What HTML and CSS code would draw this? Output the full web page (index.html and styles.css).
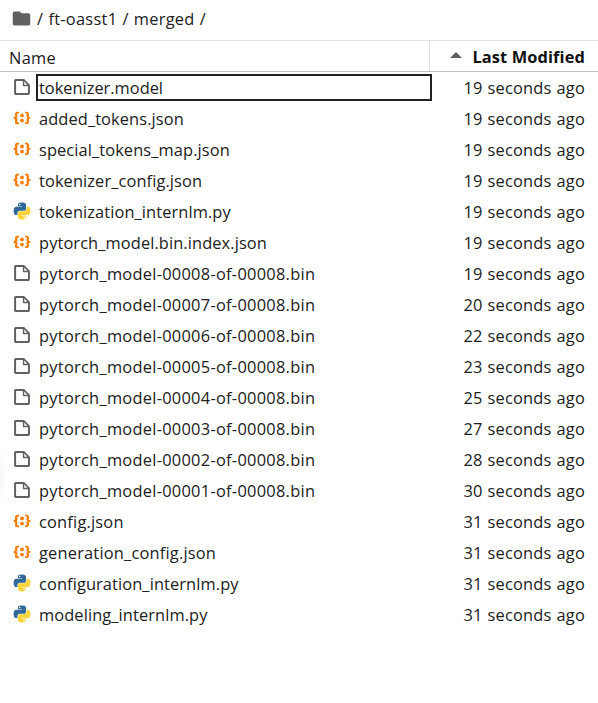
FILE: index.html
```html
<!DOCTYPE html>
<html lang="en">
<head>
<meta charset="utf-8">
<title>File browser</title>
<link rel="stylesheet" href="styles.css">
</head>
<body>
<svg class="defs" aria-hidden="true">
  <symbol id="file" viewBox="0 0 22 22"><path fill="#616161" d="M19.3 8.2l-5.5-5.5c-.3-.3-.7-.5-1.2-.5H3.9c-.8.1-1.6.9-1.6 1.8v14.1c0 .9.7 1.6 1.6 1.6h14.2c.9 0 1.6-.7 1.6-1.6V9.4c.1-.5-.1-.9-.4-1.2zm-5.8-3.3l3.4 3.6h-3.4V4.9zm3.9 12.7H4.7c-.1 0-.2 0-.2-.2V4.7c0-.2.1-.3.2-.3h7.2v4.4s0 .8.3 1.1c.3.3 1.1.3 1.1.3h4.3v7.2s-.1.2-.2.2z"/></symbol>
  <symbol id="json" viewBox="0 0 22 22"><g fill="#f57c00"><path d="M20.2 11.8c-1.6 0-1.7.5-1.7 1 0 .4.1.9.1 1.3.1.5.1.9.1 1.3 0 1.7-1.4 2.3-3.5 2.3h-.9v-1.9h.5c1.1 0 1.4 0 1.4-.8 0-.3 0-.6-.1-1 0-.4-.1-.8-.1-1.2 0-1.3 0-1.8 1.3-2-1.3-.2-1.3-.7-1.3-2 0-.4.1-.8.1-1.2.1-.4.1-.7.1-1 0-.8-.4-.7-1.4-.8h-.5V4.1h.9c2.2 0 3.5.7 3.5 2.3 0 .4-.1.9-.1 1.3-.1.5-.1.9-.1 1.3 0 .5.2 1 1.7 1v1.8zM1.8 10.1c1.6 0 1.7-.5 1.7-1 0-.4-.1-.9-.1-1.3-.1-.5-.1-.9-.1-1.3 0-1.6 1.4-2.3 3.5-2.3h.9v1.9h-.5c-1 0-1.4 0-1.4.8 0 .3 0 .6.1 1 0 .2.1.6.1 1 0 1.3 0 1.8-1.3 2C6 11.2 6 11.7 6 13c0 .4-.1.8-.1 1.2-.1.3-.1.7-.1 1 0 .8.3.8 1.4.8h.5v1.9h-.9c-2.1 0-3.5-.6-3.5-2.3 0-.4.1-.9.1-1.3.1-.5.1-.9.1-1.3 0-.5-.2-1-1.7-1v-1.9z"/><circle cx="11" cy="13.8" r="2.1"/><circle cx="11" cy="8.2" r="2.1"/></g></symbol>
  <symbol id="python" viewBox="-10 -10 131.16 132.39"><path fill="#306998" d="M54.919 0c-4.584.021-8.961.412-12.813 1.094C30.76 3.099 28.7 7.295 28.7 15.032v10.219h26.813v3.406H18.638c-7.793 0-14.616 4.684-16.75 13.594-2.462 10.213-2.571 16.586 0 27.25 1.905 7.938 6.457 13.594 14.25 13.594h9.218v-12.25c0-8.85 7.657-16.657 16.75-16.657h26.782c7.454 0 13.406-6.138 13.406-13.625v-25.53c0-7.267-6.13-12.726-13.406-13.938C64.282.328 59.502-.02 54.918 0zm-14.5 8.22c2.77 0 5.031 2.298 5.031 5.125 0 2.816-2.262 5.093-5.031 5.093-2.78 0-5.031-2.277-5.031-5.093 0-2.827 2.251-5.125 5.03-5.125z"/><path fill="#ffd43b" d="M85.638 28.657v11.906c0 9.231-7.826 17-16.75 17H42.106c-7.336 0-13.406 6.279-13.406 13.625V96.72c0 7.266 6.319 11.54 13.406 13.625 8.488 2.495 16.627 2.946 26.782 0 6.75-1.955 13.406-5.888 13.406-13.625V86.5H55.513v-3.405H95.7c7.793 0 10.696-5.436 13.406-13.594 2.8-8.399 2.68-16.476 0-27.25-1.925-7.758-5.604-13.594-13.406-13.594zM70.575 93.313c2.78 0 5.031 2.278 5.031 5.094 0 2.827-2.251 5.125-5.031 5.125-2.77 0-5.031-2.298-5.031-5.125 0-2.816 2.261-5.094 5.03-5.094z"/></symbol>
</svg>
<nav class="crumbs">
  <svg class="folder" viewBox="0 0 24 24"><path fill="#616161" d="M10 4H4c-1.1 0-2 .9-2 2v12c0 1.1.9 2 2 2h16c1.1 0 2-.9 2-2V8c0-1.1-.9-2-2-2h-8z"/></svg>
  <span class="path">/ ft-oasst1 / merged /</span>
</nav>
<header class="head">
  <div class="head-name">Name</div>
  <div class="head-modified"><i class="caret"></i><span>Last Modified</span></div>
</header>
<ul class="list">
  <li class="row"><svg class="icon"><use href="#file"/></svg><span class="name editing">tokenizer.model</span><span class="time">19 seconds ago</span></li>
  <li class="row"><svg class="icon"><use href="#json"/></svg><span class="name">added_tokens.json</span><span class="time">19 seconds ago</span></li>
  <li class="row"><svg class="icon"><use href="#json"/></svg><span class="name">special_tokens_map.json</span><span class="time">19 seconds ago</span></li>
  <li class="row"><svg class="icon"><use href="#json"/></svg><span class="name">tokenizer_config.json</span><span class="time">19 seconds ago</span></li>
  <li class="row"><svg class="icon"><use href="#python"/></svg><span class="name">tokenization_internlm.py</span><span class="time">19 seconds ago</span></li>
  <li class="row"><svg class="icon"><use href="#json"/></svg><span class="name">pytorch_model.bin.index.json</span><span class="time">19 seconds ago</span></li>
  <li class="row"><svg class="icon"><use href="#file"/></svg><span class="name shard">pytorch_model-00008-of-00008.bin</span><span class="time">19 seconds ago</span></li>
  <li class="row"><svg class="icon"><use href="#file"/></svg><span class="name shard">pytorch_model-00007-of-00008.bin</span><span class="time">20 seconds ago</span></li>
  <li class="row"><svg class="icon"><use href="#file"/></svg><span class="name shard">pytorch_model-00006-of-00008.bin</span><span class="time">22 seconds ago</span></li>
  <li class="row"><svg class="icon"><use href="#file"/></svg><span class="name shard">pytorch_model-00005-of-00008.bin</span><span class="time">23 seconds ago</span></li>
  <li class="row"><svg class="icon"><use href="#file"/></svg><span class="name shard">pytorch_model-00004-of-00008.bin</span><span class="time">25 seconds ago</span></li>
  <li class="row"><svg class="icon"><use href="#file"/></svg><span class="name shard">pytorch_model-00003-of-00008.bin</span><span class="time">27 seconds ago</span></li>
  <li class="row"><svg class="icon"><use href="#file"/></svg><span class="name shard">pytorch_model-00002-of-00008.bin</span><span class="time">28 seconds ago</span></li>
  <li class="row"><svg class="icon"><use href="#file"/></svg><span class="name shard">pytorch_model-00001-of-00008.bin</span><span class="time">30 seconds ago</span></li>
  <li class="row"><svg class="icon"><use href="#json"/></svg><span class="name config">config.json</span><span class="time">31 seconds ago</span></li>
  <li class="row"><svg class="icon"><use href="#json"/></svg><span class="name config">generation_config.json</span><span class="time">31 seconds ago</span></li>
  <li class="row"><svg class="icon"><use href="#python"/></svg><span class="name">configuration_internlm.py</span><span class="time">31 seconds ago</span></li>
  <li class="row"><svg class="icon"><use href="#python"/></svg><span class="name">modeling_internlm.py</span><span class="time">31 seconds ago</span></li>
</ul>
<div class="edge-shadow"></div>
</body>
</html>
```
FILE: styles.css
```css
* { box-sizing: border-box; }
body {
  margin: 0;
  height: 703px;
  overflow: hidden;
  position: relative;
  background: #fff;
  color: #212121;
  font: 16.4px/31px "Open Sans", "Noto Sans", sans-serif;
  white-space: nowrap;
}
.defs { display: none; }
.crumbs { display: flex; align-items: center; height: 40px; padding: 0 0 3px 11px; }
.folder { width: 21px; height: 21px; margin-right: 5px; }
.path { letter-spacing: .27px; word-spacing: .6px; margin-top: -1px; }
.head {
  display: flex;
  height: 32px;
  border-top: 1px solid #e0e0e0;
  border-bottom: 1px solid #bdbdbd;
}
.head-name { width: 430px; padding: 1px 0 0 9px; border-right: 1px solid #e0e0e0; letter-spacing: .3px; }
.head-modified {
  flex: 1;
  display: flex;
  justify-content: flex-end;
  align-items: center;
  gap: 10px;
  padding: 1px 13px 0 0;
  color: #111;
  font-weight: 700;
  letter-spacing: .12px;
}
.caret { border: 6px solid transparent; border-top: 0; border-bottom: 6px solid #616161; margin-bottom: 3px; }
.list { margin: 0; padding: 0; list-style: none; }
.row { display: flex; align-items: center; height: 31px; padding: 0 13px 0 12px; }
.icon { width: 20px; height: 20px; margin: 0 4px 1px 0; flex: none; }
.name { width: 396px; height: 27px; padding-left: 3px; line-height: 28px; letter-spacing: .1px; }
.shard { letter-spacing: .27px; }
.config { letter-spacing: .2px; }
.editing { padding-left: 1px; border: 2px solid #212121; line-height: 24px; letter-spacing: 0; }
.time { margin-left: auto; letter-spacing: .22px; word-spacing: .4px; line-height: 30px; }
.edge-shadow {
  position: absolute;
  left: -22px;
  top: 452px;
  width: 20px;
  height: 50px;
  border-radius: 50%;
  box-shadow: 0 0 14px rgba(0, 0, 0, .1);
}
```
